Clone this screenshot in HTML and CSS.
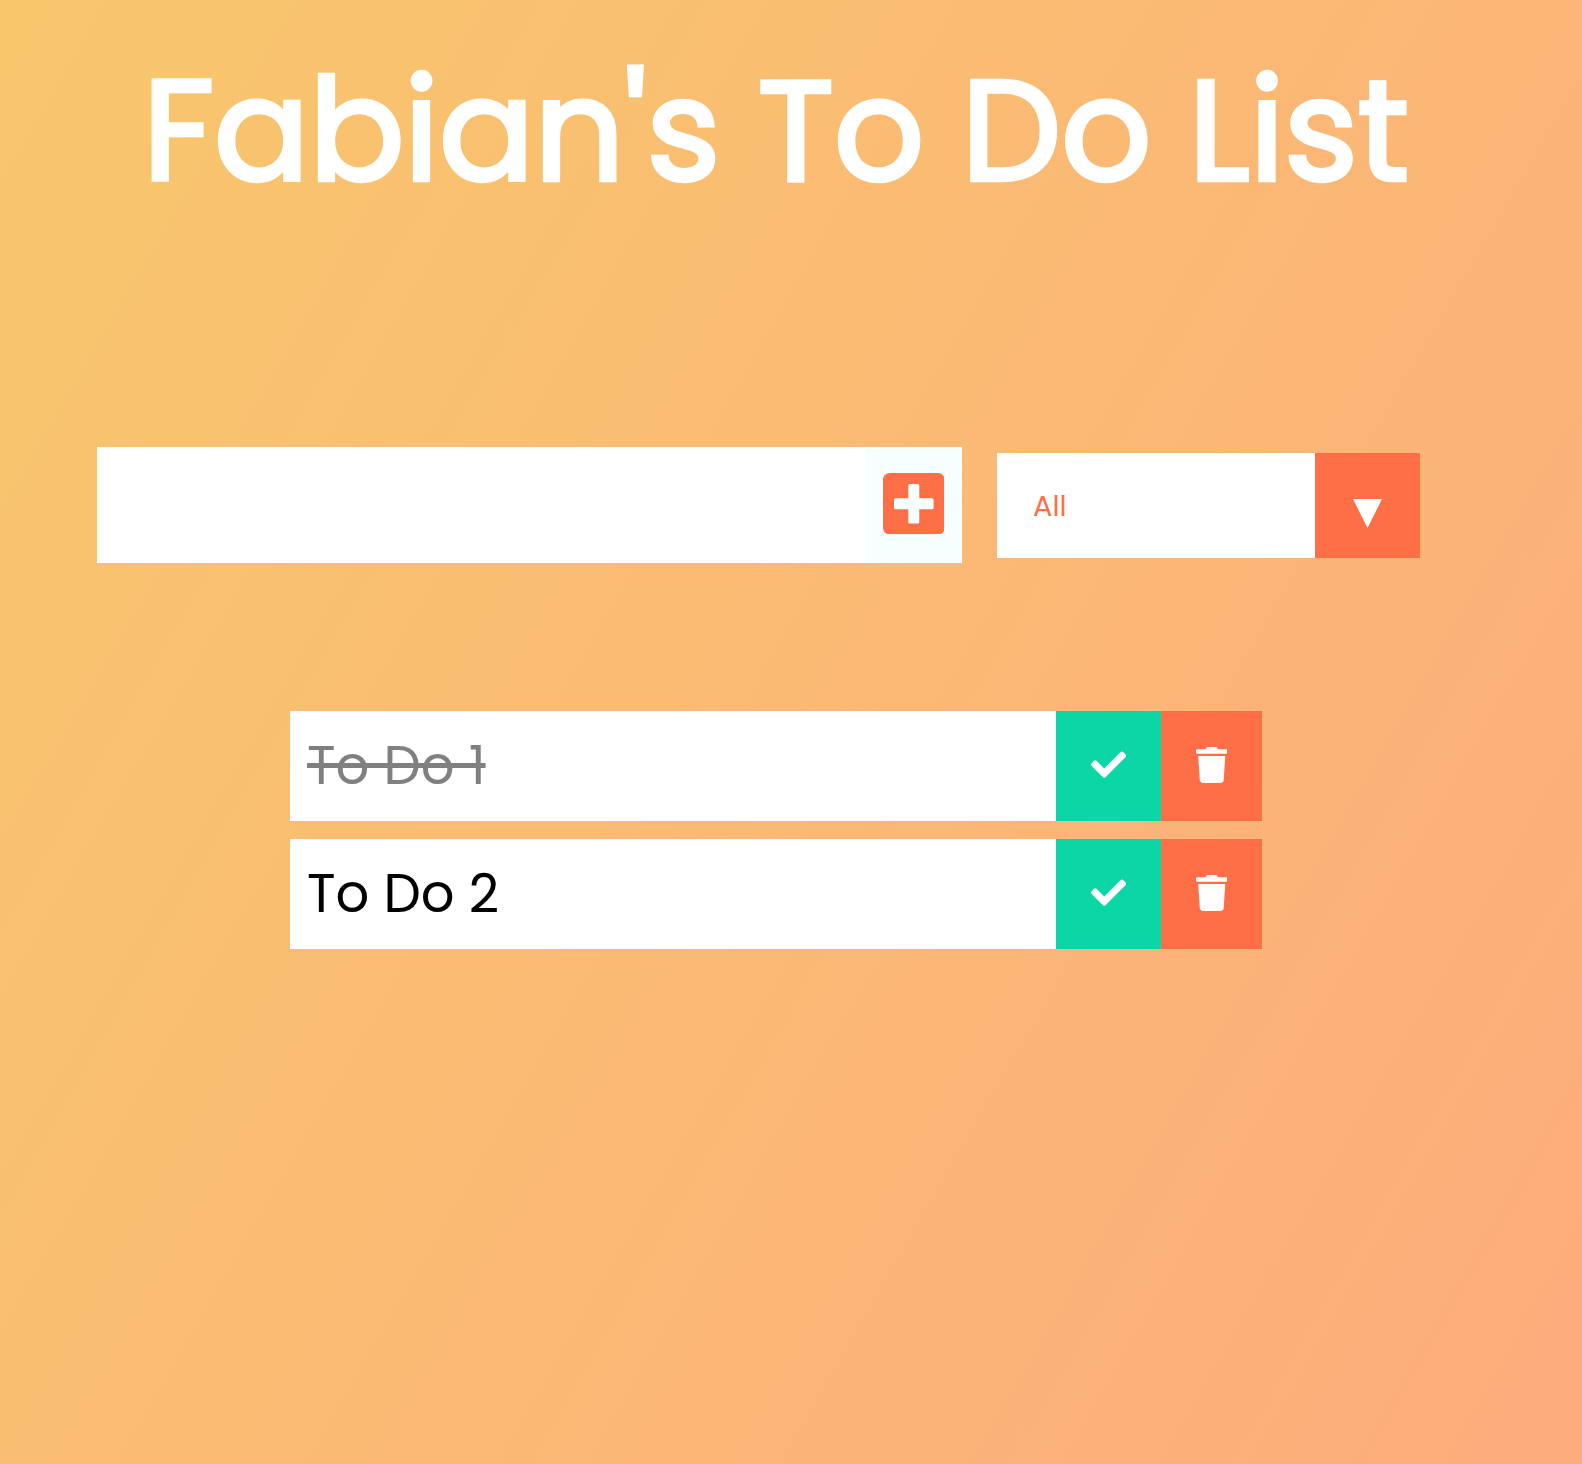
FILE: index.html
```html
<!DOCTYPE html>
<html lang="en">
<head>
<meta charset="utf-8">
<title>Fabian's To Do List</title>
<link rel="stylesheet" href="styles.css">
</head>
<body>
<svg class="sprite" aria-hidden="true">
  <symbol id="check" viewBox="0 0 512 512"><path d="M173.898 439.404l-166.4-166.4c-9.997-9.997-9.997-26.206 0-36.204l36.203-36.204c9.997-9.998 26.207-9.998 36.204 0L192 312.69 432.095 72.596c9.997-9.997 26.207-9.997 36.204 0l36.203 36.204c9.997 9.997 9.997 26.206 0 36.204l-294.4 294.401c-9.998 9.997-26.207 9.997-36.204-.001z"/></symbol>
  <symbol id="trash" viewBox="0 0 448 512"><path d="M432 32H312l-9.4-18.7A24 24 0 0 0 281.1 0H166.8a23.72 23.72 0 0 0-21.4 13.3L136 32H16A16 16 0 0 0 0 48v32a16 16 0 0 0 16 16h416a16 16 0 0 0 16-16V48a16 16 0 0 0-16-16zM53.2 467a48 48 0 0 0 47.9 45h245.8a48 48 0 0 0 47.9-45L416 128H32z"/></symbol>
  <symbol id="plus" viewBox="0 32 448 448"><path d="M400 32H48C21.5 32 0 53.5 0 80v352c0 26.5 21.5 48 48 48h352c26.5 0 48-21.500 48-48V80c0-26.500-21.500-48-48-48zm-32 252c0 6.600-5.400 12-12 12h-92v92c0 6.600-5.400 12-12 12h-56c-6.600 0-12-5.400-12-12v-92H92c-6.600 0-12-5.400-12-12v-56c0-6.600 5.400-12 12-12h92v-92c0-6.600 5.400-12 12-12h56c6.600 0 12 5.400 12 12v92h92c6.600 0 12 5.400 12 12v56z"/></symbol>
</svg>
<header>
  <h1>Fabian's To Do List</h1>
</header>
<form class="controls">
  <div class="entry">
    <input class="todo-input" type="text" aria-label="New to do">
    <button class="add" type="button" aria-label="Add"><svg><use href="#plus"/></svg></button>
  </div>
  <div class="select">
    <span class="value">All</span>
    <span class="arrow"><svg viewBox="0 0 29 29"><path d="M0 0h29L14.500 29z"/></svg></span>
  </div>
</form>
<ul class="todos">
  <li class="todo done"><span class="label"><span class="text">To Do 1</span></span><button class="complete" aria-label="Complete"><svg><use href="#check"/></svg></button><button class="remove" aria-label="Delete"><svg><use href="#trash"/></svg></button></li>
  <li class="todo"><span class="label"><span class="text">To Do 2</span></span><button class="complete" aria-label="Complete"><svg><use href="#check"/></svg></button><button class="remove" aria-label="Delete"><svg><use href="#trash"/></svg></button></li>
</ul>
</body>
</html>
```
FILE: styles.css
```css
* { box-sizing: border-box; margin: 0; padding: 0; }
body {
  min-height: 1464px;
  background: linear-gradient(120deg, #f8c76c, #fdac7c);
  font-family: Poppins, Inter, sans-serif;
  overflow: hidden;
}
.sprite { display: none; }
button { border: 0; display: flex; align-items: center; justify-content: center; }
header { height: 447px; padding: 31px 0 0 143px; }
h1 {
  height: 200px;
  line-height: 200px;
  font-size: 140.8px;
  font-weight: 400;
  -webkit-text-stroke: 4.4px #fff;
  color: #fff;
  white-space: nowrap;
}
.controls { display: flex; align-items: center; gap: 35px; padding-left: 97px; height: 116px; }
.entry { display: flex; width: 865px; height: 116px; }
.todo-input { width: 768px; border: 0; background: #fff; font: inherit; font-size: 52.8px; padding: 0 18px; }
.add { width: 97px; background: #f7fffe; padding-bottom: 3px; }
.add svg { width: 61.6px; height: 61.6px; fill: #ff6f47; }
.select { display: flex; width: 423px; height: 105px; background: #fff; color: #ff6f47; }
.value { flex: 1; padding-left: 36px; font-size: 28.8px; line-height: 107px; }
.arrow { width: 105px; background: #ff6f47; display: flex; align-items: center; justify-content: center; padding-top: 16px; }
.arrow svg { width: 29px; height: 29px; fill: #fff; }
.todos { list-style: none; display: flex; flex-direction: column; gap: 18px; width: 972px; margin: 148px 0 0 290px; }
.todo { display: flex; height: 110px; background: #fff; }
.label { flex: 1; padding-left: 17px; font-size: 52.8px; line-height: 110px; color: #000; }
.done .text { color: #808080; text-decoration: line-through; text-decoration-thickness: 5px; }
.complete { width: 105px; background: #0bd6a5; padding-bottom: 3px; }
.complete svg { width: 35.2px; height: 35.2px; fill: #fff; }
.remove { width: 101px; background: #ff6f47; padding-bottom: 3px; }
.remove svg { width: 31.5px; height: 36px; fill: #fff; }
```
